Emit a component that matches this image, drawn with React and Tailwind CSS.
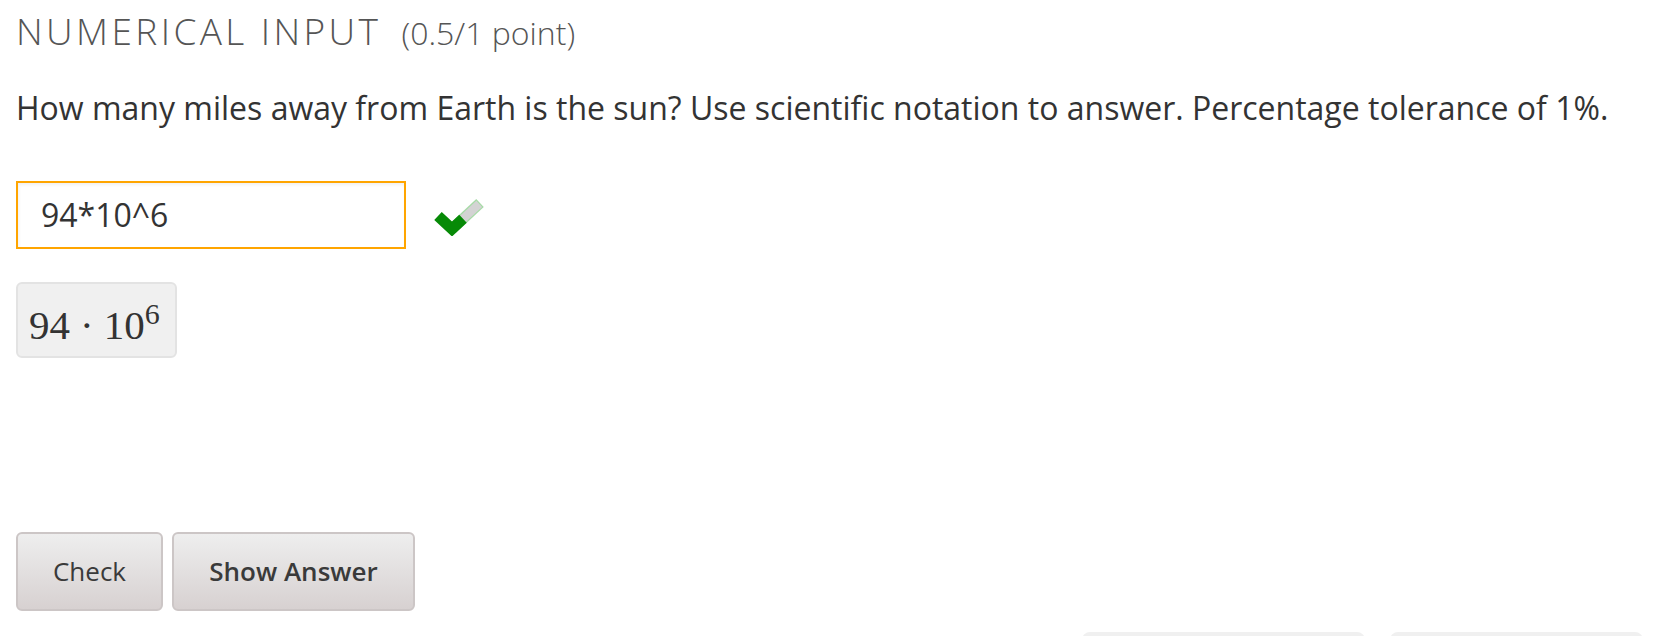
export default function App() {
  return (
    <div
      className="w-[1678px] h-[636px] overflow-hidden bg-white pl-[16px] pt-[9px]"
      style={{ fontFamily: '"Open Sans", "Liberation Sans", sans-serif' }}
    >
      <div className="flex items-baseline h-[45px]">
        <h3 className="text-[37px] leading-[44px] font-light tracking-[3.4px] text-[#555] uppercase">
          Numerical Input
        </h3>
        <span className="ml-[20px] text-[32px] leading-[42px] font-light text-[#555]">
          (0.5/1 point)
        </span>
      </div>

      <p className="mt-[32px] text-[32px] leading-[44px] text-[#333]">
        How many miles away from Earth is the sun? Use scientific notation to
        answer. Percentage tolerance of 1%.
      </p>

      <div className="mt-[51px] flex items-center">
        <div className="w-[390px] h-[68px] border-2 border-[#ffa500] bg-white shadow-[inset_1px_2px_3px_rgba(0,0,0,0.06)] flex items-center px-[23px] text-[32px] text-[#333]">
          94*10^6
        </div>
        <svg
          width="50"
          height="38"
          viewBox="0 0 50 38"
          className="ml-[28px] mt-[3px]"
        >
          <polyline
            points="18,31 46,5"
            fill="none"
            stroke="#a6dba6"
            strokeWidth="11"
          />
          <polyline
            points="18,31 45.2,5.8"
            fill="none"
            stroke="#d3d3d3"
            strokeWidth="8.5"
          />
          <polyline
            points="4,18 18,31 29,20.8"
            fill="none"
            stroke="#078a07"
            strokeWidth="11"
            strokeLinejoin="miter"
          />
        </svg>
      </div>

      <div
        className="mt-[33px] w-[161px] h-[76px] rounded-[6px] border-2 border-[#e3e3e3] bg-[#f0f0f0] flex items-center pl-[11px] text-[41px] leading-none text-[#333]"
        style={{ fontFamily: '"Liberation Serif", "DejaVu Serif", serif' }}
      >
        <span className="mt-[4px]">
          94<span className="mx-[10px]">·</span>10
          <span className="text-[30px] align-[15px]">6</span>
        </span>
      </div>

      <div className="mt-[174px] flex gap-[9px]">
        <button className="w-[147px] h-[79px] rounded-[6px] border-2 border-[#ccc6c6] bg-gradient-to-b from-[#eeeeee] to-[#d7d1d1] text-[26px] text-[#3a3a3a]">
          Check
        </button>
        <button className="w-[243px] h-[79px] rounded-[6px] border-2 border-[#ccc6c6] bg-gradient-to-b from-[#eeeeee] to-[#d7d1d1] text-[26px] font-semibold text-[#3a3a3a]">
          Show Answer
        </button>
      </div>

      <div className="mt-[21px] flex justify-end gap-[25px] pr-[35px]">
        <div className="w-[283px] h-[40px] rounded-t-[8px] bg-[#f0f0f0]" />
        <div className="w-[253px] h-[40px] rounded-t-[8px] bg-[#f0f0f0]" />
      </div>
    </div>
  );
}
